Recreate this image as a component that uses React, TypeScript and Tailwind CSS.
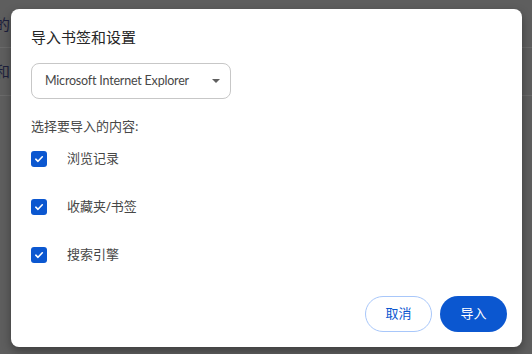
const FONT = { fontFamily: '"Noto Sans", "Noto Sans CJK SC", sans-serif' };

const ITEMS = ["浏览记录", "收藏夹/书签", "搜索引擎"];

function CheckBox() {
  return (
    <div className="flex h-4 w-4 shrink-0 items-center justify-center rounded-[3px] bg-[#0b57d0]">
      <svg width="10" height="10" viewBox="0 0 10 10" fill="none">
        <path d="M1.8 5.2 L4 7.3 L8.3 2.8" stroke="white" strokeWidth="1.6" strokeLinecap="round" strokeLinejoin="round" />
      </svg>
    </div>
  );
}

export default function App() {
  return (
    <div className="relative h-[354px] w-[532px] overflow-hidden bg-[#5e5e5e]" style={FONT}>
      {/* page behind the overlay */}
      <div className="flex flex-col">
        <div className="flex h-[48px] items-center border-b border-[#6a6a6a] pt-[2px]">
          <span className="-ml-[5px] text-[15px] text-[#1d1f3c]">的</span>
        </div>
        <div className="flex h-[48px] items-center border-b border-[#6a6a6a]">
          <span className="-ml-[5px] text-[15px] text-[#1d1f3c]">和</span>
        </div>
      </div>

      {/* dialog */}
      <div className="absolute left-[11px] top-[9px] flex h-[338px] w-[511px] flex-col rounded-[8px] bg-white pl-[20px] pr-[15px] pt-[18px] pb-[15px] shadow-[0_4px_10px_rgba(0,0,0,0.35)]">
        <h1 className="text-[15px] leading-[20px] text-[#262626]">导入书签和设置</h1>

        <div className="mt-[16px] flex h-[36px] w-[200px] items-center justify-between rounded-[8px] border border-[#c7c7c7] pl-[13px] pr-[10px]">
          <span className="font-['Lato',sans-serif] text-[12.5px] tracking-[-0.2px] text-[#474747]">Microsoft Internet Explorer</span>
          <svg width="8" height="4" viewBox="0 0 8 4">
            <path d="M0 0 H8 L4 4 Z" fill="#5f5f5f" />
          </svg>
        </div>

        <p className="mt-[18px] text-[13px] leading-[18px] text-[#474747]">选择要导入的内容:</p>

        <div className="flex flex-col">
          {ITEMS.map((item) => (
            <div key={item} className="flex h-[48px] items-center gap-[20px]">
              <CheckBox />
              <span className="text-[13px] text-[#474747]">{item}</span>
            </div>
          ))}
        </div>

        <div className="mt-auto flex justify-end gap-[8px]">
          <button className="h-[36px] w-[67px] rounded-full border border-[#a8c7fa] text-[13px] text-[#0b57d0]">
            取消
          </button>
          <button className="h-[36px] w-[67px] rounded-full bg-[#0b57d0] text-[13px] text-white">
            导入
          </button>
        </div>
      </div>
    </div>
  );
}
